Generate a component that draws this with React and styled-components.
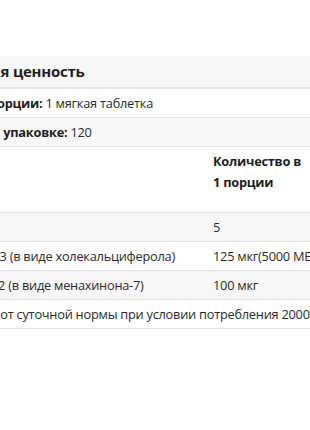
import React from "react";
import styled, { createGlobalStyle } from "styled-components";

const GlobalStyle = createGlobalStyle`
  html, body {
    margin: 0;
    padding: 0;
    background: #ffffff;
  }
`;

const facts = [
  { name: "Калории", amount: "5", dv: "" },
  { name: "Витамин D3 (в виде холекальциферола)", amount: "125 мкг(5000 МЕ)", dv: "625%" },
  { name: "Витамин K2 (в виде менахинона-7)", amount: "100 мкг", dv: "83%" },
];

const App = () => {
  return (
    <Window>
      <GlobalStyle />
      <Sheet>
        <Title>Пищевая ценность</Title>
        <InfoRow>
          <b>Размер порции:</b> 1 мягкая таблетка
        </InfoRow>
        <InfoRow shade>
          <b>Порций в упаковке:</b> 120
        </InfoRow>
        <HeadRow>
          <HeadCell />
          <HeadCell>Количество в 1 порции</HeadCell>
          <HeadCell>% от суточной нормы*</HeadCell>
        </HeadRow>
        {facts.map((f, i) => (
          <FactRow key={f.name} shade={i % 2 === 0}>
            <Cell lead>{f.name}</Cell>
            <Cell>{f.amount}</Cell>
            <Cell>{f.dv}</Cell>
          </FactRow>
        ))}
        <InfoRow>*Процент от суточной нормы при условии потребления 2000 калорий.</InfoRow>
      </Sheet>
    </Window>
  );
};

const Window = styled.div`
  width: 310px;
  height: 430px;
  overflow: hidden;
  background: #ffffff;
  padding-top: 56px;
  box-sizing: border-box;
`;

const Sheet = styled.section`
  width: 560px;
  margin-left: -70px;
  font-family: "Open Sans", "Liberation Sans", Arial, sans-serif;
  font-size: 12.8px;
  letter-spacing: -0.25px;
  color: #2b2b2b;
`;

const Title = styled.h2`
  margin: 0;
  padding: 7px 8px 8px;
  background: #f7f7f7;
  border-bottom: 2px solid #e6e6e6;
  font-size: 15px;
  line-height: 16px;
  font-weight: bold;
  color: #1e1e1e;
`;

const InfoRow = styled.div`
  padding: 6px 8px;
  line-height: 16px;
  white-space: nowrap;
  background: ${({ shade }) => (shade ? "#f7f7f7" : "#ffffff")};
  border-bottom: 1px solid #e4e4e4;

  b {
    font-weight: 700;
    color: #1e1e1e;
  }
`;

const HeadRow = styled.div`
  display: grid;
  grid-template-columns: 275px 104px 1fr;
  border-bottom: 1px solid #e4e4e4;
  min-height: 65px;
`;

const HeadCell = styled.div`
  padding: 4px 8px;
  font-weight: 700;
  line-height: 21px;
  color: #1e1e1e;
`;

const FactRow = styled.div`
  display: grid;
  grid-template-columns: 275px 104px 1fr;
  background: ${({ shade }) => (shade ? "#f7f7f7" : "#ffffff")};
  border-bottom: 1px solid #e4e4e4;
`;

const Cell = styled.div`
  padding: 6px 8px 6px ${({ lead }) => (lead ? "4px" : "8px")};
  line-height: 16px;
  white-space: nowrap;
`;

export default App;
